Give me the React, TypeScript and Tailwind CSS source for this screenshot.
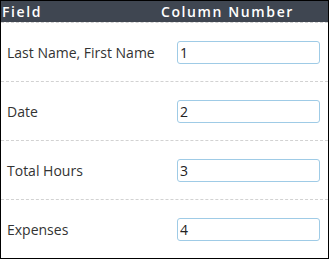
const rows = [
  { label: 'Last Name, First Name', value: '1' },
  { label: 'Date', value: '2' },
  { label: 'Total Hours', value: '3' },
  { label: 'Expenses', value: '4' },
];

export default function App() {
  return (
    <div
      className="flex h-[259px] w-[329px] flex-col border border-black bg-white"
      style={{ fontFamily: '"Open Sans", "Liberation Sans", sans-serif' }}
    >
      <div className="flex h-[21px] items-center bg-[#3f4651] text-[14px] font-semibold leading-[21px] tracking-[1.6px] text-white">
        <div className="w-[160px] pl-[1px]">Field</div>
        <div>Column Number</div>
      </div>
      {rows.map((row) => (
        <div
          key={row.label}
          className="flex h-[59px] items-center border-t border-dashed border-[#d2d2d2]"
        >
          <div className="w-[176px] pl-[6px] text-[14px] text-[#333]">
            {row.label}
          </div>
          <input
            readOnly
            value={row.value}
            className="h-[23px] w-[143px] rounded-[3px] border border-[#9fcbe6] bg-white pl-[2px] text-[14px] text-[#222] outline-none"
          />
        </div>
      ))}
    </div>
  );
}
